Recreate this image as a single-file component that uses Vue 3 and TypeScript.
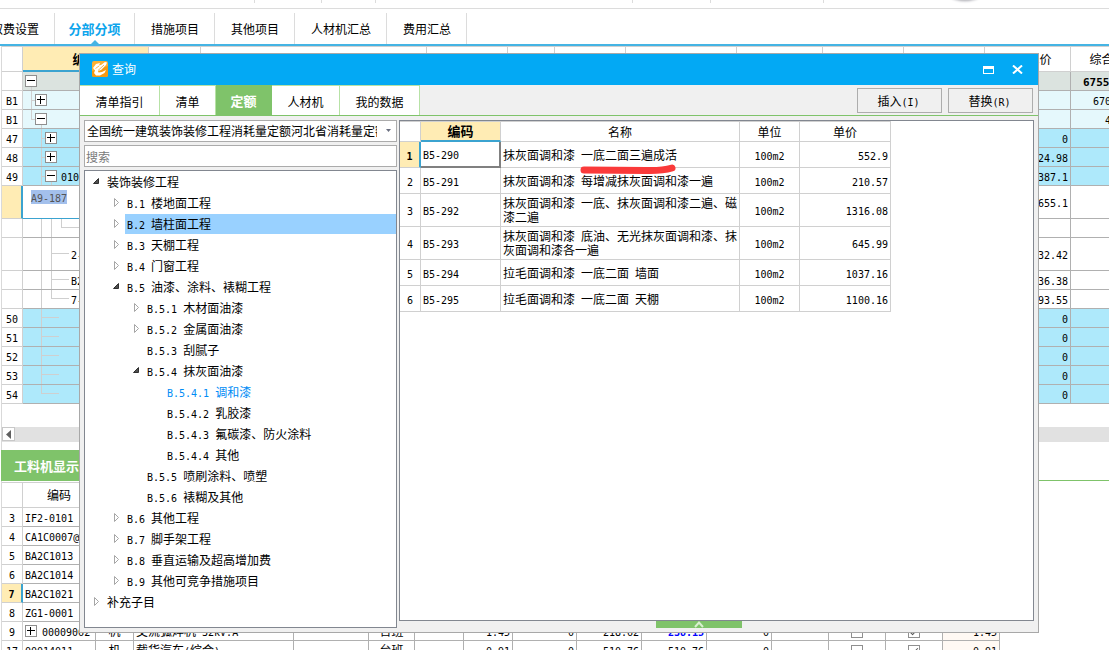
<script setup lang="ts">
import { h, ref } from 'vue'
import type { FunctionalComponent } from 'vue'

// Sets Latin runs in a half-width face beside full-width Chinese text.
const Txt: FunctionalComponent<{ t: string }> = (p) =>
  h(
    'span',
    { class: 'txt' },
    (p.t.match(/[\x20-\x7e]+|[^\x20-\x7e]+/g) ?? []).map((run) =>
      /^[\x20-\x7e]/.test(run) ? h('span', { class: 'lat' }, run) : run
    )
  )
Txt.props = ['t']

const toolGroups = ['g1', 'g2', 'g3', 'g4', 'g5', 'g6']

const mainTabs = [
  { label: '取费设置', active: false },
  { label: '分部分项', active: true },
  { label: '措施项目', active: false },
  { label: '其他项目', active: false },
  { label: '人材机汇总', active: false },
  { label: '费用汇总', active: false }
]

interface BillRow {
  no: string
  kind: string
  lines: string
  box?: { x: number; open: boolean }
  indent: number
  code: string
  price: string
  total: string
  totalPad?: string
  tall?: boolean
}

const billRows: BillRow[] = [
  { no: '', kind: 'sum', lines: 'M8.5 15V19', box: { x: 2, open: true }, indent: 38, code: '', price: '', total: '6755', totalPad: 'p12' },
  { no: 'B1', kind: 'part', lines: 'M8.5 0V19M8 9.5H12', box: { x: 12, open: false }, indent: 38, code: '', price: '', total: '670', totalPad: 'p22' },
  { no: 'B1', kind: 'part', lines: 'M8.5 0V9M8 9.5H12M18.5 15V19', box: { x: 12, open: true }, indent: 38, code: '', price: '', total: '4', totalPad: 'p34' },
  { no: '47', kind: 'item', lines: 'M18.5 0V19M18 9.5H22', box: { x: 22, open: false }, indent: 38, code: '', price: '0', total: '' },
  { no: '48', kind: 'item', lines: 'M18.5 0V19M18 9.5H22', box: { x: 22, open: false }, indent: 38, code: '', price: '24.98', total: '' },
  { no: '49', kind: 'item', lines: 'M18.5 0V19M18 9.5H22M28.5 15V19', box: { x: 22, open: true }, indent: 38, code: '010', price: '387.1', total: '' },
  { no: '', kind: 'active', lines: '', indent: 8, code: 'A9-187', price: '655.1', total: '', tall: true },
  { no: '', kind: 'sub', lines: 'M18.5 0V19M28.5 0V19M38.5 0V9M38 8.5H56', indent: 56, code: '', price: '', total: '' },
  { no: '', kind: 'sub', lines: 'M18.5 0V33M28.5 0V33M28 15.5H46', indent: 48, code: '2-', price: '32.42', total: '', tall: true },
  { no: '', kind: 'sub', lines: 'M18.5 0V19M28.5 0V19M28 8.5H46', indent: 48, code: 'B2', price: '36.38', total: '' },
  { no: '', kind: 'sub', lines: 'M18.5 0V19M28.5 0V9M28 8.5H46', indent: 48, code: '7-', price: '93.55', total: '' },
  { no: '50', kind: 'item', lines: 'M18.5 0V19M18 8.5H36', indent: 38, code: '', price: '0', total: '' },
  { no: '51', kind: 'item', lines: 'M18.5 0V19M18 8.5H36', indent: 38, code: '', price: '0', total: '' },
  { no: '52', kind: 'item', lines: 'M18.5 0V19M18 8.5H36', indent: 38, code: '', price: '0', total: '' },
  { no: '53', kind: 'item', lines: 'M18.5 0V19M18 8.5H36', indent: 38, code: '', price: '0', total: '' },
  { no: '54', kind: 'item', lines: 'M18.5 0V9M18 8.5H36', indent: 38, code: '', price: '0', total: '' }
]

interface ResRow {
  no: string
  code: string
  box?: boolean
  active?: boolean
  unit?: string
  name?: string
  shift?: string
  nums?: string[]
  last?: string
  blue?: boolean
}

const resRows: ResRow[] = [
  { no: '3', code: 'IF2-0101' },
  { no: '4', code: 'CA1C0007@' },
  { no: '5', code: 'BA2C1013' },
  { no: '6', code: 'BA2C1014' },
  { no: '7', code: 'BA2C1021', active: true },
  { no: '8', code: 'ZG1-0001' },
  { no: '9', code: '00009062', box: true, unit: '机', name: '交流弧焊机 32kV.A', shift: '台班', nums: ['1.45', '0', '218.62', '238.15', '0'], last: '1.45', blue: true },
  { no: '17', code: '00014011', unit: '机', name: '载货汽车(综合)', shift: '台班', nums: ['0.91', '0', '510.76', '510.76', '0'], last: '0.91' }
]

const dialogTabs = [
  { label: '清单指引', size: 'w80' },
  { label: '清单', size: 'w56' },
  { label: '定额', size: 'w56' },
  { label: '人材机', size: 'w68' },
  { label: '我的数据', size: 'w80' }
]
const activeTab = ref('定额')

const library = '全国统一建筑装饰装修工程消耗量定额河北省消耗量定额'
const search = ref('')

interface Node {
  label: string
  level: number
  state: 'open' | 'closed' | 'leaf'
}
const tree: Node[] = [
  { label: '装饰装修工程', level: 0, state: 'open' },
  { label: 'B.1 楼地面工程', level: 1, state: 'closed' },
  { label: 'B.2 墙柱面工程', level: 1, state: 'closed' },
  { label: 'B.3 天棚工程', level: 1, state: 'closed' },
  { label: 'B.4 门窗工程', level: 1, state: 'closed' },
  { label: 'B.5 油漆、涂料、裱糊工程', level: 1, state: 'open' },
  { label: 'B.5.1 木材面油漆', level: 2, state: 'closed' },
  { label: 'B.5.2 金属面油漆', level: 2, state: 'closed' },
  { label: 'B.5.3 刮腻子', level: 2, state: 'leaf' },
  { label: 'B.5.4 抹灰面油漆', level: 2, state: 'open' },
  { label: 'B.5.4.1 调和漆', level: 3, state: 'leaf' },
  { label: 'B.5.4.2 乳胶漆', level: 3, state: 'leaf' },
  { label: 'B.5.4.3 氟碳漆、防火涂料', level: 3, state: 'leaf' },
  { label: 'B.5.4.4 其他', level: 3, state: 'leaf' },
  { label: 'B.5.5 喷刷涂料、喷塑', level: 2, state: 'leaf' },
  { label: 'B.5.6 裱糊及其他', level: 2, state: 'leaf' },
  { label: 'B.6 其他工程', level: 1, state: 'closed' },
  { label: 'B.7 脚手架工程', level: 1, state: 'closed' },
  { label: 'B.8 垂直运输及超高增加费', level: 1, state: 'closed' },
  { label: 'B.9 其他可竞争措施项目', level: 1, state: 'closed' },
  { label: '补充子目', level: 0, state: 'closed' }
]
const hovered = 'B.2 墙柱面工程'
const current = 'B.5.4.1 调和漆'

const quotas = [
  { code: 'B5-290', name: '抹灰面调和漆 一底二面三遍成活', price: '552.9' },
  { code: 'B5-291', name: '抹灰面调和漆 每增减抹灰面调和漆一遍', price: '210.57' },
  { code: 'B5-292', name: '抹灰面调和漆 一底、抹灰面调和漆二遍、磁漆二遍', price: '1316.08', tall: true },
  { code: 'B5-293', name: '抹灰面调和漆 底油、无光抹灰面调和漆、抹灰面调和漆各一遍', price: '645.99', tall: true },
  { code: 'B5-294', name: '拉毛面调和漆 一底二面 墙面', price: '1037.16' },
  { code: 'B5-295', name: '拉毛面调和漆 一底二面 天棚', price: '1100.16' }
]
</script>

<template>
  <div class="app">
    <div class="toolstrip">
      <span v-for="g in toolGroups" :key="g" :class="g"></span>
      <i class="knob"></i>
    </div>

    <nav class="main-tabs">
      <button v-for="t in mainTabs" :key="t.label" type="button" :class="{ on: t.active }">
        <span>{{ t.label }}</span>
      </button>
    </nav>

    <main class="workspace">
      <table class="grid bill">
        <colgroup>
          <col class="c-no" /><col class="c126" /><col class="c52" /><col class="c226" /><col class="c81" />
          <col class="c47" /><col class="c71" /><col class="c111" /><col class="c86" /><col class="c81" />
          <col class="c81" /><col class="c86" /><col class="c86" />
        </colgroup>
        <thead>
          <tr>
            <th></th>
            <th class="sel">编码</th>
            <th v-for="n in 9" :key="n"></th>
            <th>综合单价</th>
            <th>综合合价</th>
          </tr>
        </thead>
        <tbody>
          <tr v-for="(r, i) in billRows" :key="i" :class="[r.kind, { tall: r.tall }]">
            <td class="no"><Txt :t="r.no" /></td>
            <td class="code">
              <div class="branch">
                <svg :width="r.indent" :height="r.tall ? 32 : 18" aria-hidden="true">
                  <path :d="r.lines" fill="none" stroke="#cfcfcf" />
                  <g v-if="r.box" :transform="`translate(${r.box.x} 3)`" fill="#fff" stroke="#8f8f8f">
                    <rect x=".5" y=".5" width="11" height="11" />
                    <path :d="r.box.open ? 'M2 5.5H10' : 'M2 5.5H10M5.5 2V10'" stroke="#000" />
                  </g>
                </svg>
                <Txt :t="r.code" />
              </div>
            </td>
            <td v-for="n in 9" :key="n"></td>
            <td class="num"><Txt :t="r.price" /></td>
            <td class="total" :class="r.totalPad"><Txt :t="r.total" /></td>
          </tr>
        </tbody>
      </table>

      <div class="hscroll">
        <button type="button" aria-label="向左滚动">
          <svg width="12" height="13"><path d="M8 2V11L3 6.5Z" fill="#606060" /></svg>
        </button>
      </div>

      <div class="lower-tabs"><button type="button">工料机显示</button></div>

      <table class="grid res">
        <colgroup>
          <col class="c-no" /><col class="c73" /><col class="c38" /><col class="c160" /><col class="c75" />
          <col class="c46" /><col class="c49" /><col class="c49" /><col class="c64" /><col class="c65" />
          <col class="c65" /><col class="c65" /><col class="c57" /><col class="c57" /><col class="c57" /><col class="c57" />
        </colgroup>
        <thead>
          <tr>
            <th></th>
            <th>编码</th>
            <th v-for="n in 14" :key="n"></th>
          </tr>
        </thead>
        <tbody>
          <tr v-for="r in resRows" :key="r.no" :class="{ picked: r.active }">
            <td class="no"><Txt :t="r.no" /></td>
            <td class="rcode">
              <div class="branch">
                <svg v-if="r.box" width="17" height="12" aria-hidden="true">
                  <rect x=".5" y=".5" width="11" height="11" fill="#fff" stroke="#8f8f8f" />
                  <path d="M2 5.5H10M5.5 2V10" stroke="#000" />
                </svg>
                <Txt :t="r.code" />
              </div>
            </td>
            <td class="mid">{{ r.unit }}</td>
            <td class="rname"><Txt :t="r.name ?? ''" /></td>
            <td></td>
            <td class="mid">{{ r.shift }}</td>
            <td></td>
            <td v-for="n in 5" :key="n" class="num" :class="{ blue: r.blue && n === 4 }">
              <Txt :t="r.nums ? r.nums[n - 1] : ''" />
            </td>
            <td></td>
            <td class="mid"><input v-if="r.nums" type="checkbox" aria-label="暂估" /></td>
            <td class="mid"><input v-if="r.nums" type="checkbox" aria-label="调差" checked /></td>
            <td class="num warm"><Txt :t="r.last ?? ''" /></td>
          </tr>
        </tbody>
      </table>
    </main>

    <section class="dialog" role="dialog" aria-labelledby="dlg-title">
      <header class="titlebar">
        <svg class="logo" width="16" height="16" viewBox="0 0 16 16" aria-hidden="true">
          <rect width="16" height="16" rx="2" fill="#fbb034" />
          <path d="M0 10L16 5V14Q16 16 14 16H2Q0 16 0 14Z" fill="#f59a14" />
          <path d="M1 7L4 3L8 2L7 4.500L9 4L13 1L15 1.500L14 4L9 9L6 10L6.500 11.500L10 11L14 9L12.500 12L8 14.500H4L2 12L3 9.500Z" fill="#fff" />
          <path d="M3.500 7.500L7 5M6 9.500L12 4" stroke="#f9b650" stroke-width="1" />
        </svg>
        <h1 id="dlg-title">查询</h1>
        <button type="button" class="max" aria-label="最大化">
          <svg width="11" height="8"><path d="M0 0H11V8H0ZM1 3V7H10V3Z" fill="#fff" fill-rule="evenodd" /></svg>
        </button>
        <button type="button" aria-label="关闭">
          <svg width="11" height="9"><path d="M1 .5L10 8.500M10 .5L1 8.500" stroke="#fff" stroke-width="2" /></svg>
        </button>
      </header>

      <div class="tabbar">
        <button
          v-for="t in dialogTabs"
          :key="t.label"
          type="button"
          :class="['tab', t.size, { on: t.label === activeTab }]"
          @click="activeTab = t.label"
        >{{ t.label }}</button>
        <div class="actions">
          <button type="button"><Txt t="插入(I)" /></button>
          <button type="button"><Txt t="替换(R)" /></button>
        </div>
      </div>

      <div class="content">
        <aside class="left">
          <div class="combo">
            <select aria-label="定额库"><option>{{ library }}</option></select>
            <svg width="7" height="4" aria-hidden="true"><path d="M1 0H6L3.500 3Z" fill="#6a6f80" /></svg>
          </div>
          <input v-model="search" class="search" type="text" placeholder="搜索" aria-label="搜索" />
          <ul class="tree">
            <li v-for="n in tree" :key="n.label" :class="'lv' + n.level">
              <svg width="12" height="12" aria-hidden="true">
                <path v-if="n.state === 'open'" d="M8.500 2.500V7.500H3.500Z" fill="#505050" stroke="#303030" />
                <path v-else-if="n.state === 'closed'" d="M4.500 1.500V9.500L8.500 5.500Z" fill="#fff" stroke="#a6a6a6" />
              </svg>
              <button type="button" :class="{ hover: n.label === hovered, current: n.label === current }">
                <Txt :t="n.label" />
              </button>
            </li>
          </ul>
        </aside>

        <div class="right">
          <div class="result">
            <table class="quota">
              <colgroup><col class="q-no" /><col class="q-code" /><col class="q-name" /><col class="q-unit" /><col class="q-price" /></colgroup>
              <thead>
                <tr><th></th><th class="sel">编码</th><th>名称</th><th>单位</th><th>单价</th></tr>
              </thead>
              <tbody>
                <tr v-for="(q, i) in quotas" :key="q.code" :class="{ first: i === 0, tall: q.tall }">
                  <td class="no"><Txt :t="String(i + 1)" /></td>
                  <td class="qcode"><Txt :t="q.code" /></td>
                  <td class="qname">
                    <Txt :t="q.name" />
                    <svg v-if="i === 0" class="mark" width="98" height="12" aria-hidden="true">
                      <path d="M4 7L66 7.500Q82 8 92 5" fill="none" stroke="#fa3a3a" stroke-width="7" stroke-linecap="round" />
                    </svg>
                  </td>
                  <td class="mid"><Txt t="100m2" /></td>
                  <td class="num"><Txt :t="q.price" /></td>
                </tr>
              </tbody>
            </table>
          </div>
          <button type="button" class="handle" aria-label="展开">
            <svg width="10" height="7"><path d="M1 6L5 1.500L9 6" fill="none" stroke="#d9f0d0" stroke-width="2" /></svg>
          </button>
        </div>
      </div>
    </section>
  </div>
</template>

<style>
body {
  margin: 0;
}
.txt .lat {
  font-family: 'DejaVu Sans Mono', 'Liberation Mono', monospace;
  font-size: 10px;
  line-height: 1;
  white-space: pre-wrap;
}
</style>

<style scoped>
.app {
  position: relative;
  display: flex;
  flex-direction: column;
  height: 100vh;
  overflow: hidden;
  background: #fff;
  color: #000;
  font-family: 'Noto Sans CJK SC', sans-serif;
  font-size: 12px;
  line-height: 14px;
}
.app * {
  box-sizing: border-box;
}
button,
input,
select {
  margin: 0;
  padding: 0;
  border: 0;
  border-radius: 0;
  background: none;
  color: inherit;
  font: inherit;
}
svg {
  display: block;
  flex: none;
}

.toolstrip {
  display: flex;
  flex: none;
  height: 9px;
  overflow: hidden;
  border-bottom: 1px solid #dcdcdc;
}
.toolstrip span {
  flex: none;
  height: 3px;
  border-right: 1px solid #dcdcdc;
}
.g1 { width: 255px; }
.g2 { width: 67px; }
.g3 { width: 54px; }
.g4 { width: 257px; }
.g5 { width: 78px; }
.g6 { width: 113px; }
.knob {
  width: 40px;
  height: 24px;
  margin: -23px 0 0 121px;
  border-radius: 50%;
  background: #c8c8cc;
  box-shadow: 0 1px 2px #d4d4d8;
}

.main-tabs {
  display: flex;
  flex: none;
  height: 37px;
  margin-left: -25px;
  padding-top: 4px;
  border-bottom: 2px solid #45b4e4;
}
.main-tabs button {
  position: relative;
  flex: none;
  min-width: 80px;
  padding: 0 15px 0 16px;
  border-right: 1px solid #dcdcdc;
  white-space: nowrap;
}
.main-tabs button.on {
  padding: 0 13px;
  color: #0da5ec;
  font-size: 13px;
  font-weight: bold;
}
.main-tabs button.on::after {
  content: '';
  position: absolute;
  left: 50%;
  bottom: 0;
  margin-left: -4px;
  border: 4px solid transparent;
  border-top: 0;
  border-bottom-color: #45b4e4;
}

.workspace {
  flex: none;
  margin-left: 1px;
  border-left: 1px solid #d9d9d9;
}
table {
  border-spacing: 0;
  table-layout: fixed;
}
th,
td {
  padding: 0;
  border: 0 solid #b0b0b0;
  border-width: 0 1px 1px 0;
  font-weight: normal;
  white-space: nowrap;
}
.bill {
  border-top: 1px solid #d0d0d0;
}
.grid th {
  height: 25px;
  border-color: #d0d0d0;
  overflow: hidden;
}
.grid td {
  height: 19px;
  overflow: hidden;
}
.grid .tall td {
  height: 33px;
}
.grid th.sel,
.quota th.sel {
  border-bottom: 2px solid #3ba3d0;
  background: #ffecb4;
  font-size: 13px;
  font-weight: bold;
}
.c-no { width: 21px; }
.c126 { width: 126px; }
.c52 { width: 52px; }
.c226 { width: 226px; }
.c81 { width: 81px; }
.c47 { width: 47px; }
.c71 { width: 71px; }
.c111 { width: 111px; }
.c86 { width: 86px; }
.c73 { width: 73px; }
.c38 { width: 38px; }
.c160 { width: 160px; }
.c75 { width: 75px; }
.c46 { width: 46px; }
.c49 { width: 49px; }
.c64 { width: 64px; }
.c65 { width: 65px; }
.c57 { width: 57px; }
.bill {
  width: 1154px;
}
.res {
  width: 998px;
}
td.no {
  border-color: #d0d0d0;
  background: #fff;
  text-align: center;
}
.sum td { background: #dbe3df; }
.part td { background: #e5f8fc; }
.item td { background: #aee9fb; }
.grid tr td.no { background: #fff; }
.sum .total { font-weight: bold; }
.sum .total :deep(.lat) { font-size: 11px; }
.active td.no {
  border-right: 2px solid #3ba3d0;
  background: #ffecb4 !important;
}
.active td.code {
  border-bottom-color: #3ba3d0;
  vertical-align: top;
}
.active .branch {
  padding-top: 4px;
}
.active .branch svg {
  height: 1px;
}
.active .branch .txt {
  background: #a3c0ec;
  color: #555;
}
.branch {
  display: flex;
  align-items: center;
}
.num {
  padding-right: 2px;
  text-align: right;
}
.mid {
  text-align: center;
}
.p12 { padding-left: 12px; }
.p22 { padding-left: 22px; }
.p34 { padding-left: 34px; }

.hscroll {
  display: flex;
  height: 15px;
  margin-top: 23px;
  background: #e1e1e1;
}
.hscroll button {
  width: 13px;
  height: 14px;
  border: 1px solid #c8c8c8;
  background: #fff;
}
.lower-tabs {
  height: 31px;
  margin: 8px 0 0 -1px;
  border-bottom: 1px solid #7fc36a;
}
.lower-tabs button {
  height: 30px;
  padding: 2px 13px 0;
  background: #7fc36a;
  color: #fff;
  font-size: 13px;
  font-weight: bold;
}
.res {
  margin-top: 1px;
  border-top: 1px solid #d0d0d0;
}
.rcode,
.rname {
  padding-left: 2px;
}
.picked td.no {
  border-right: 2px solid #3ba3d0;
  background: #ffecb4 !important;
  font-weight: bold;
}
.blue {
  color: #00f;
  font-weight: bold;
}
.warm {
  background: #fff9f4;
}
.grid input {
  display: inline-grid;
  place-content: center;
  width: 12px;
  height: 12px;
  border: 1px solid #8f8f8f;
  background: #fff;
  vertical-align: middle;
  appearance: none;
}
.grid input:checked::before {
  content: '';
  width: 7px;
  height: 3px;
  margin-top: -2px;
  border: solid #555;
  border-width: 0 0 1px 1px;
  transform: rotate(-45deg);
}

.dialog {
  position: absolute;
  top: 53px;
  right: 70px;
  bottom: 17px;
  left: 79px;
  display: flex;
  flex-direction: column;
  border: 1px solid #a8a8a8;
  background: #f0f0f0;
}
.titlebar {
  display: flex;
  flex: none;
  align-items: center;
  height: 31px;
  padding: 0 14px 1px 12px;
  background: #03a9f4;
  color: #fff;
}
h1 {
  flex: 1;
  margin: 0 0 0 4px;
  font-size: 12px;
  font-weight: normal;
}
.titlebar button {
  margin-left: 16px;
  padding: 2px 1px 1px;
}
.titlebar .max {
  margin-left: 0;
}
.tabbar {
  display: flex;
  flex: none;
  height: 31px;
  border-bottom: 1px solid #7fc36a;
}
.tab {
  border-top: 1px solid #b7e2a6;
  border-right: 1px solid #b7e2a6;
  background: #fff;
  padding-top: 2px;
}
.tab.on {
  padding-top: 0;
  border-color: #7fc36a;
  background: #7fc36a;
  color: #fff;
  font-size: 13px;
  font-weight: bold;
}
.w80 { width: 80px; }
.w56 { width: 56px; }
.w68 { width: 68px; }
.actions {
  display: flex;
  gap: 6px;
  margin: 3px 5px 0 auto;
}
.actions button {
  width: 85px;
  height: 25px;
  padding-right: 2px;
  border: 1px solid #adadad;
  background: #f0f0f0;
}
.content {
  display: flex;
  flex: 1;
  gap: 2px;
  min-height: 0;
  padding: 4px;
}
.left {
  display: flex;
  flex: none;
  flex-direction: column;
  gap: 3px;
  width: 313px;
}
.combo {
  display: flex;
  flex: none;
  align-items: center;
  height: 22px;
  padding: 0 4px 0 2px;
  border: 1px solid #ababab;
  background: #fff;
}
.combo select {
  flex: 1;
  min-width: 0;
  height: 20px;
  overflow: hidden;
  appearance: none;
  text-overflow: clip;
}
.combo svg {
  margin-left: 8px;
}
.search {
  flex: none;
  height: 22px;
  padding: 0 1px;
  border: 1px solid #ababab;
  background: #fff;
}
.search::placeholder {
  color: #7a7a7a;
}
.tree {
  flex: 1;
  min-height: 0;
  margin: 0;
  padding: 0;
  overflow: hidden;
  border: 1px solid #828790;
  background: #fff;
  list-style: none;
}
.tree li {
  display: flex;
  align-items: center;
  height: 21px;
  padding-left: 5px;
}
.tree li svg {
  margin-right: 3px;
}
.tree li button {
  flex: 1;
  height: 20px;
  padding: 0 2px;
  text-align: left;
  white-space: nowrap;
}
.tree .lv1 { padding-left: 25px; }
.tree .lv2 { padding-left: 45px; }
.tree .lv3 { padding-left: 65px; }
.tree .hover {
  background: #99d1ff;
}
.tree .current {
  color: #008cf5;
}

.right {
  display: flex;
  flex: 1;
  flex-direction: column;
  min-width: 0;
}
.result {
  flex: 1;
  min-height: 0;
  overflow: hidden;
  border: 1px solid #828790;
  background: #fff;
}
.quota {
  width: 491px;
  border-top: 1px solid #d0d0d0;
}
.quota th,
.quota td {
  height: 26px;
  border-color: #d0d0d0;
}
.quota th {
  height: 20px;
}
.quota .tall td {
  height: 33px;
}
.q-no { width: 21px; }
.q-code { width: 80px; }
.q-name { width: 239px; }
.q-unit { width: 60px; }
.q-price { width: 91px; }
.qcode,
.qname {
  padding-left: 2px;
}
.qname {
  position: relative;
  white-space: normal;
}
.quota .first td.no {
  border-right: 2px solid #3ba3d0;
  background: #ffecb4;
  font-weight: bold;
}
.quota .first .qcode {
  border-right: 2px solid #808080;
  border-bottom: 2px solid #808080;
}
.mark {
  position: absolute;
  top: 21px;
  left: 79px;
}
.handle {
  display: flex;
  flex: none;
  justify-content: center;
  width: 86px;
  height: 7px;
  margin-left: 257px;
  background: #7fc36a;
}
</style>
